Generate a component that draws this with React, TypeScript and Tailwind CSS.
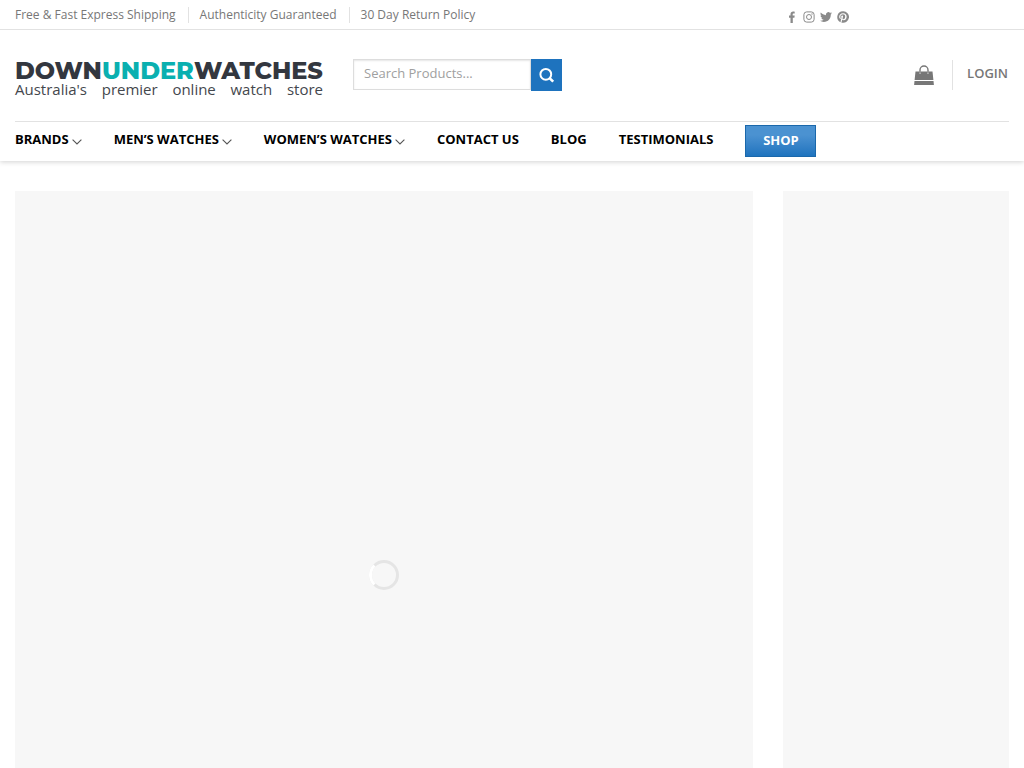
import React from "react";

const topLinks = ["Free & Fast Express Shipping", "Authenticity Guaranteed", "30 Day Return Policy"];

const navLinks = [
  { label: "BRANDS", menu: true },
  { label: "MEN’S WATCHES", menu: true },
  { label: "WOMEN’S WATCHES", menu: true },
  { label: "CONTACT US", menu: false },
  { label: "BLOG", menu: false },
  { label: "TESTIMONIALS", menu: false },
];

const tagline = ["Australia's", "premier", "online", "watch", "store"];

function Facebook() {
  return (
    <svg viewBox="0 0 12 12" className="size-3" fill="currentColor" aria-hidden="true">
      <path d="M4.500 12V6.800H3V4.600h1.500V3.200C4.500 1.500 5.500.6 7.200.6c.7 0 1.300.1 1.500.1v1.900h-1c-.8 0-1 .4-1 1v1h2l-.3 2.200H6.800V12z" />
    </svg>
  );
}

function Instagram() {
  return (
    <svg viewBox="0 0 12 12" className="size-3" fill="none" stroke="currentColor" strokeWidth="1" aria-hidden="true">
      <rect x="0.900" y="0.900" width="10.200" height="10.200" rx="2.800" />
      <circle cx="6" cy="6" r="2.500" />
      <circle cx="9" cy="3" r="0.700" fill="currentColor" stroke="none" />
    </svg>
  );
}

function Twitter() {
  return (
    <svg viewBox="0 0 24 24" className="size-3" fill="currentColor" aria-hidden="true">
      <path d="M23.950 4.570a10 10 0 0 1-2.820.77 4.960 4.960 0 0 0 2.160-2.720 9.900 9.900 0 0 1-3.120 1.180 4.920 4.920 0 0 0-8.380 4.480C7.690 8.100 4.070 6.130 1.640 3.160a4.820 4.820 0 0 0-.67 2.480c0 1.710.87 3.210 2.190 4.100a4.900 4.900 0 0 1-2.230-.62v.06a4.920 4.920 0 0 0 3.950 4.830 5 5 0 0 1-2.210.08 4.940 4.940 0 0 0 4.600 3.420A9.870 9.870 0 0 1 0 19.540a14 14 0 0 0 7.550 2.210c9.050 0 14-7.500 14-13.980 0-.21 0-.42-.02-.63a9.940 9.940 0 0 0 2.420-2.570z" />
    </svg>
  );
}

function Pinterest() {
  return (
    <svg viewBox="0 0 24 24" className="size-3" fill="currentColor" aria-hidden="true">
      <path d="M12 .5a11.500 11.500 0 0 0-4.600 22c-.1-.9-.1-2.200.1-3.200l1.400-5.900s-.4-.7-.4-1.700c0-1.600.9-2.800 2.100-2.800 1 0 1.500.7 1.500 1.600 0 1-.6 2.500-1 3.900-.3 1.100.6 2.100 1.700 2.100 2.100 0 3.600-2.600 3.600-5.700 0-2.400-1.600-4.100-4.500-4.100-3.300 0-5.300 2.400-5.300 5.200 0 .9.300 1.600.7 2.100.2.200.2.300.1.600l-.2.900c-.1.300-.3.400-.5.300-1.600-.6-2.300-2.300-2.300-4.200 0-3.100 2.600-6.900 7.900-6.900 4.200 0 7 3 7 6.300 0 4.400-2.400 7.600-6 7.600-1.200 0-2.300-.6-2.700-1.400l-.8 3c-.2.900-.7 1.900-1.200 2.600A11.500 11.500 0 1 0 12 .5z" />
    </svg>
  );
}

const socials = [
  { name: "Facebook", Icon: Facebook },
  { name: "Instagram", Icon: Instagram },
  { name: "Twitter", Icon: Twitter },
  { name: "Pinterest", Icon: Pinterest },
];

function Chevron() {
  return (
    <svg viewBox="0 0 10 6" className="mt-1 h-1.5 w-2.5" fill="none" stroke="#555" strokeWidth="1.1" aria-hidden="true">
      <path d="M.6.6 5 5 9.400.6" />
    </svg>
  );
}

export default function App() {
  return (
    <div className="min-h-screen bg-white font-['Open_Sans',sans-serif] text-[#777]">
      <header className="shadow-[0_1px_5px_rgba(0,0,0,0.18)]">
        <div className="border-b border-[#e2e2e2]">
          <div className="flex h-[29px] items-center justify-between pr-[175px] pl-[15px]">
            <ul className="flex items-center text-xs">
              {topLinks.map((label) => (
                <li key={label} className="mr-[11px] flex h-4 items-center border-r border-[#e2e2e2] pr-3 last:mr-0 last:border-0 last:pr-0">
                  <a href="#">{label}</a>
                </li>
              ))}
            </ul>
            <div className="flex gap-[5px] pt-1 text-[#8a8a8a]">
              {socials.map(({ name, Icon }) => (
                <a key={name} href="#" aria-label={name}>
                  <Icon />
                </a>
              ))}
            </div>
          </div>
        </div>

        <div className="px-[15px]">
          <div className="flex h-[91px] items-center pb-0.5">
            <a href="#" className="mr-[30px] block w-[308px] shrink-0 pt-2">
              <span className="block font-['Montserrat','Inter',sans-serif] text-2xl leading-5 font-extrabold whitespace-nowrap text-[#33373f]">
                DOWN<span className="text-[#0ab0b0]">UNDER</span>WATCHES
              </span>
              <span className="flex justify-between text-[15px] leading-4 text-[#44474d]">
                {tagline.map((word) => (
                  <span key={word}>{word}</span>
                ))}
              </span>
            </a>
            <form className="flex w-[209px]" role="search" onSubmit={(e) => e.preventDefault()}>
              <input
                type="search"
                aria-label="Search products"
                placeholder="Search Products..."
                className="h-[31px] min-w-0 flex-1 border border-[#ddd] px-2.5 pb-0.5 text-[13px] text-[#333] shadow-[inset_0_1px_2px_rgba(0,0,0,0.1)] outline-none placeholder:text-[#a0a0a0]"
              />
              <button type="submit" aria-label="Search" className="flex h-8 w-[31px] items-center justify-center bg-[#1e73be] text-white">
                <svg viewBox="0 0 16 16" className="size-4" fill="none" stroke="currentColor" strokeWidth="2" aria-hidden="true">
                  <circle cx="6.800" cy="7.300" r="5.400" />
                  <path d="m10.800 11.300 3.400 3.400" strokeWidth="2.600" />
                </svg>
              </button>
            </form>
            <div className="ml-auto flex items-center pr-px">
              <a href="#" aria-label="Cart" className="text-[#777]">
                <svg viewBox="0 0 20 20" className="size-5" fill="currentColor" aria-hidden="true">
                  <path d="M1.500 6.500h3.800v2.600h1.500V6.500h6.400v2.600h1.500V6.500h3.800l.9 8.500H.6z" />
                  <path d="M6 8.800V5a4 4 0 0 1 8 0v3.800" fill="none" stroke="currentColor" strokeWidth="1.400" />
                  <path d="M.5 16h19l.4 4H.1z" />
                </svg>
              </a>
              <span className="mr-3.5 ml-[18px] h-[30px] w-px bg-[#e2e2e2]" />
              <a href="#" className="pb-0.5 text-[13px] font-semibold text-[#777]">
                LOGIN
              </a>
            </div>
          </div>

          <nav className="flex h-10 items-center gap-8 border-t border-[#e2e2e2] pb-0.5 text-[13px] font-bold text-black">
            {navLinks.map(({ label, menu }) => (
              <a key={label} href="#" className="flex items-center gap-[3px] pb-0.5 whitespace-nowrap">
                {label}
                {menu && <Chevron />}
              </a>
            ))}
            <a
              href="#"
              className="flex h-8 w-[71px] items-center justify-center border border-[#1b68ab] bg-linear-to-b from-[#4b92d1] from-30% to-[#1e73be] text-white"
            >
              SHOP
            </a>
          </nav>
        </div>
      </header>

      <main className="grid grid-cols-4 gap-[30px] px-[15px] pt-[30px]">
        <section className="col-span-3 flex aspect-[738/768] items-center justify-center bg-[#f7f7f7]" aria-busy="true">
          <svg viewBox="0 0 30 30" className="size-[30px]" fill="none" strokeWidth="3" role="img" aria-label="Loading">
            <circle cx="15" cy="15" r="13.500" stroke="#e5e5e5" />
            <path d="M5.450 5.450a13.500 13.500 0 0 0 0 19.100" stroke="#fff" />
          </svg>
        </section>
        <aside className="bg-[#f7f7f7]" />
      </main>
    </div>
  );
}
